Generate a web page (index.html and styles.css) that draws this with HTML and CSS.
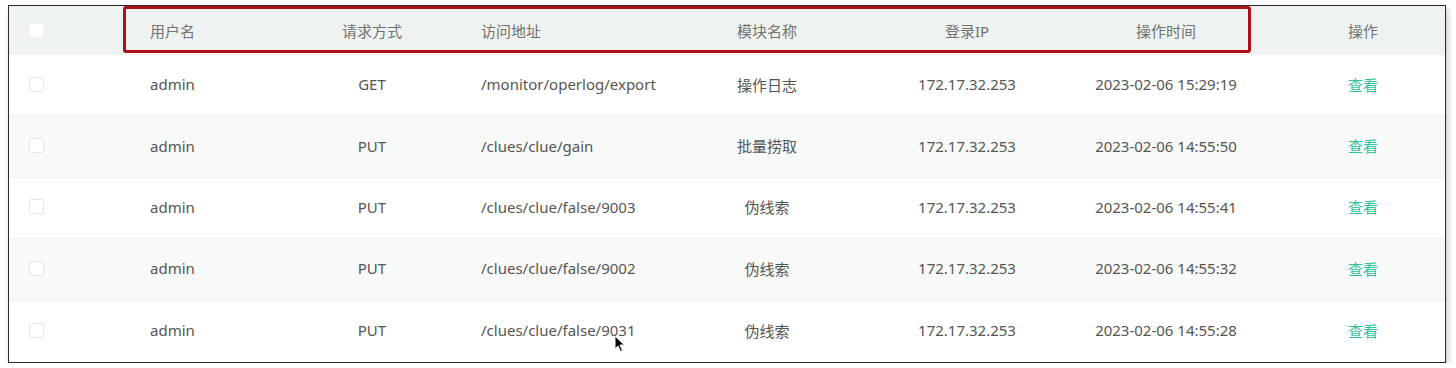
FILE: index.html
```html
<!DOCTYPE html>
<html lang="zh-CN">
<head>
<meta charset="utf-8">
<title>操作日志</title>
<link rel="stylesheet" href="styles.css">
</head>
<body>
<div class="frame">
  <div class="table">
    <div class="row head">
      <div class="cell c1"><span class="cb"></span></div>
      <div class="cell c2">用户名</div>
      <div class="cell c3">请求方式</div>
      <div class="cell c4">访问地址</div>
      <div class="cell c5">模块名称</div>
      <div class="cell c6">登录IP</div>
      <div class="cell c7">操作时间</div>
      <div class="cell c8">操作</div>
    </div>
    <div class="row">
      <div class="cell c1"><span class="cb"></span></div>
      <div class="cell c2">admin</div>
      <div class="cell c3">GET</div>
      <div class="cell c4">/monitor/operlog/export</div>
      <div class="cell c5">操作日志</div>
      <div class="cell c6">172.17.32.253</div>
      <div class="cell c7">2023-02-06 15:29:19</div>
      <div class="cell c8"><a class="link">查看</a></div>
    </div>
    <div class="row stripe">
      <div class="cell c1"><span class="cb"></span></div>
      <div class="cell c2">admin</div>
      <div class="cell c3">PUT</div>
      <div class="cell c4">/clues/clue/gain</div>
      <div class="cell c5">批量捞取</div>
      <div class="cell c6">172.17.32.253</div>
      <div class="cell c7">2023-02-06 14:55:50</div>
      <div class="cell c8"><a class="link">查看</a></div>
    </div>
    <div class="row">
      <div class="cell c1"><span class="cb"></span></div>
      <div class="cell c2">admin</div>
      <div class="cell c3">PUT</div>
      <div class="cell c4">/clues/clue/false/9003</div>
      <div class="cell c5">伪线索</div>
      <div class="cell c6">172.17.32.253</div>
      <div class="cell c7">2023-02-06 14:55:41</div>
      <div class="cell c8"><a class="link">查看</a></div>
    </div>
    <div class="row stripe">
      <div class="cell c1"><span class="cb"></span></div>
      <div class="cell c2">admin</div>
      <div class="cell c3">PUT</div>
      <div class="cell c4">/clues/clue/false/9002</div>
      <div class="cell c5">伪线索</div>
      <div class="cell c6">172.17.32.253</div>
      <div class="cell c7">2023-02-06 14:55:32</div>
      <div class="cell c8"><a class="link">查看</a></div>
    </div>
    <div class="row last">
      <div class="cell c1"><span class="cb"></span></div>
      <div class="cell c2">admin</div>
      <div class="cell c3">PUT</div>
      <div class="cell c4">/clues/clue/false/9031</div>
      <div class="cell c5">伪线索</div>
      <div class="cell c6">172.17.32.253</div>
      <div class="cell c7">2023-02-06 14:55:28</div>
      <div class="cell c8"><a class="link">查看</a></div>
    </div>
  </div>
  <div class="highlight"></div>
  <svg class="cursor" width="12" height="18" viewBox="0 0 12 18">
    <path d="M1 1 L1 14 L4 11 L6.5 16.5 L8.5 15.5 L6 10 L10.5 10 Z" fill="#000" stroke="#fff" stroke-width="1"/>
  </svg>
</div>
</body>
</html>
```

FILE: styles.css
```css
* { box-sizing: border-box; }
html, body { margin: 0; padding: 0; background: #ffffff; }
body {
  font-family: "Noto Sans", "Noto Sans CJK SC", sans-serif;
  font-size: 15px;
  color: #555555;
  padding: 5px 10px 0 8px;
}
.frame {
  position: relative;
  width: 1438px;
  height: 358px;
  border: 1px solid #2b2b2b;
  background: #fff;
  box-shadow: 2px 3px 6px rgba(0, 0, 0, 0.22);
}
.table {
  display: flex;
  flex-direction: column;
}
.row {
  display: grid;
  grid-template-columns: 101px 170px 184px 206px 194px 206px 192px 183px;
  height: 61.4px;
  border-bottom: 1px solid #eef1f0;
}
.row.last { border-bottom: none; }
.row.head {
  height: 49px;
  background: #eef2f1;
  color: #727272;
  border-bottom: none;
}
.row:not(.head) .cell { padding-bottom: 2px; }
.row.stripe { background: #f8faf9; }
.cell {
  display: flex;
  align-items: center;
  justify-content: center;
  white-space: nowrap;
}
.row .c1 { justify-content: flex-start; padding-left: 20px; padding-bottom: 0; }
.c2 { justify-content: flex-start; padding-left: 40px; }
.c4 { justify-content: flex-start; padding-left: 17px; }
.c8 { padding-left: 19px; }
.cb {
  width: 15px;
  height: 15px;
  border: 1px solid #e4e7e6;
  border-radius: 2px;
  background: #fff;
}
.head .cb { border-color: #f2f4f3; }
.link {
  color: #2fc3a0;
  cursor: pointer;
}
.highlight {
  position: absolute;
  left: 114px;
  top: 0px;
  width: 1128px;
  height: 47px;
  border: 3px solid #ad1019;
  border-radius: 3px;
}
.cursor {
  position: absolute;
  left: 605px;
  top: 329px;
}
```
